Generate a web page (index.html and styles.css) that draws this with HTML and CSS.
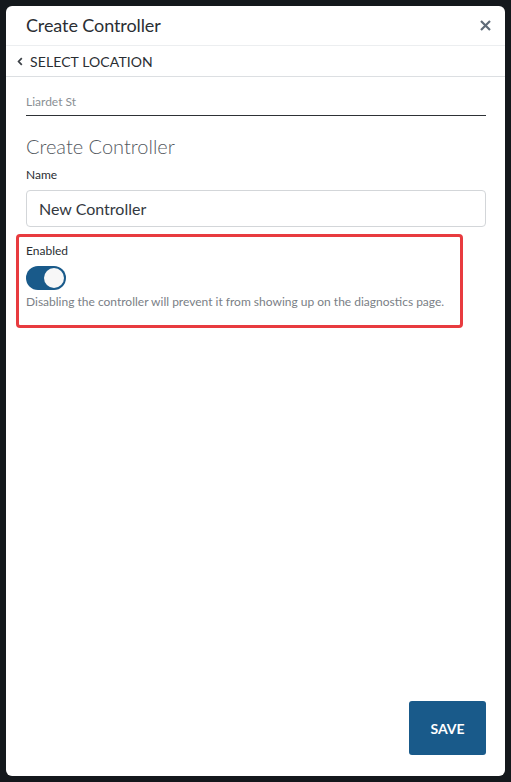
FILE: index.html
```html
<!DOCTYPE html>
<html>
<head>
<meta charset="utf-8">
<link rel="stylesheet" href="styles.css">
</head>
<body>
<div class="backdrop">
  <div class="modal">
    <div class="modal-header">
      <h1 class="modal-title">Create Controller</h1>
      <svg class="close" width="11" height="11" viewBox="0 0 11 11"><path d="M1 1 L10 10 M10 1 L1 10" stroke="#5f6b78" stroke-width="2.2"/></svg>
    </div>
    <div class="nav-row">
      <svg class="chev" width="6" height="9" viewBox="0 0 6 9"><path d="M4.8 1.2 L1.6 4.5 L4.8 7.8" fill="none" stroke="#3a3f45" stroke-width="1.7"/></svg>
      <span class="nav-text">SELECT LOCATION</span>
    </div>
    <div class="modal-body">
      <div class="location">Liardet St</div>
      <h2 class="section-title">Create Controller</h2>
      <label class="field-label">Name</label>
      <div class="input">New Controller</div>
      <div class="highlight">
        <div class="field-label">Enabled</div>
        <div class="toggle"><div class="knob"></div></div>
        <div class="help">Disabling the controller will prevent it from showing up on the diagnostics page.</div>
      </div>
    </div>
    <div class="modal-footer">
      <button class="save">SAVE</button>
    </div>
  </div>
</div>
</body>
</html>
```
FILE: styles.css
```css
html, body {
  margin: 0;
  padding: 0;
  background: #14181c;
  font-family: Lato, "Open Sans", sans-serif;
}
.backdrop {
  width: 511px;
  height: 782px;
  padding: 6px;
  box-sizing: border-box;
  background: #14181c;
}
.modal {
  width: 499px;
  height: 770px;
  background: #fff;
  border-radius: 6px;
  display: flex;
  flex-direction: column;
  box-sizing: border-box;
}
.modal-header {
  height: 39px;
  display: flex;
  align-items: center;
  justify-content: space-between;
  padding: 0 14px 0 20px;
  border-bottom: 1px solid #eceef0;
}
.modal-title {
  margin: 0;
  font-size: 18px;
  font-weight: 400;
  color: #2a2e33;
  position: relative;
  top: -1px;
  letter-spacing: -0.1px;
}
.close {
  display: block;
}
.nav-row {
  height: 30px;
  display: flex;
  align-items: center;
  padding-left: 11px;
  gap: 7px;
  border-bottom: 1px solid #dcdfe2;
}
.nav-text {
  font-size: 14px;
  color: #2a2e33;
  letter-spacing: 0.1px;
}
.modal-body {
  flex: 1;
  padding: 0 19px 0 20px;
  display: flex;
  flex-direction: column;
}
.location {
  margin-top: 17px;
  font-size: 12px;
  color: #8a8f94;
  padding-bottom: 6px;
  border-bottom: 1px solid #2e3236;
}
.section-title {
  margin: 18px 0 0;
  font-size: 20px;
  font-weight: 300;
  color: #555a5f;
}
.field-label {
  display: block;
  font-size: 12px;
  color: #2a2e33;
}
.modal-body > .field-label {
  margin-top: 9px;
}
.input {
  margin-top: 8px;
  height: 37px;
  box-sizing: border-box;
  border: 1px solid #d3d6d9;
  border-radius: 4px;
  padding: 0 12px;
  display: flex;
  align-items: center;
  font-size: 16px;
  color: #333840;
}
.highlight {
  margin: 7px 23px 0 -10px;
  border: 3px solid #e83b3f;
  border-radius: 4px;
  padding: 6px 7px 16px 7px;
}
.toggle {
  margin-top: 8px;
  width: 40px;
  height: 24px;
  border-radius: 12px;
  background: #195a8a;
  display: flex;
  align-items: center;
  justify-content: flex-end;
  padding: 2px;
  box-sizing: border-box;
}
.knob {
  width: 20px;
  height: 20px;
  border-radius: 50%;
  background: #f7f7f7;
}
.help {
  margin-top: 4px;
  font-size: 12px;
  color: #7a8086;
}
.modal-footer {
  display: flex;
  justify-content: flex-end;
  padding: 0 19px 21px 0;
}
.save {
  width: 77px;
  height: 54px;
  border: none;
  border-radius: 3px;
  background: #195a8a;
  color: #fff;
  font-family: Lato, sans-serif;
  font-weight: 700;
  font-size: 14px;
}
```
